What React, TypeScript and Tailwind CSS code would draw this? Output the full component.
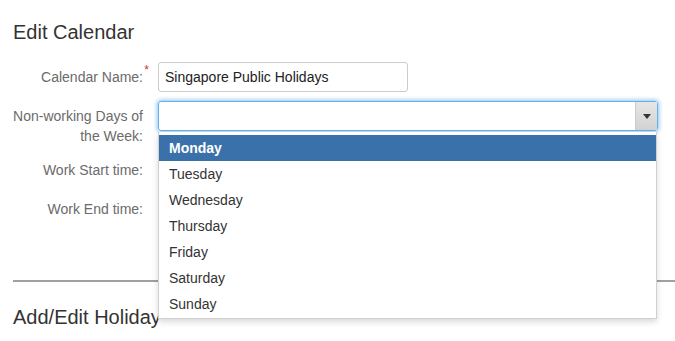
import React from "react";

const days = ["Monday", "Tuesday", "Wednesday", "Thursday", "Friday", "Saturday", "Sunday"];

function Label({ children, required }: { children: React.ReactNode; required?: boolean }) {
  return (
    <div className="w-[145px] shrink-0 pr-[15px] pt-[5px] text-right text-[14px] leading-[20px] text-[#6b6b6b] relative">
      {children}
      {required && (
        <span className="absolute right-[9px] top-[2px] text-[12px] leading-[12px] text-[#d0312d]">*</span>
      )}
    </div>
  );
}

export default function App() {
  return (
    <div
      className="w-[675px] h-[341px] overflow-hidden bg-white pl-[13px] pt-[21px] text-[#333]"
      style={{ fontFamily: '"Liberation Sans", Arial, sans-serif' }}
    >
      <h2 className="text-[20px] leading-[22px] text-[#333]">Edit Calendar</h2>

      <div className="mt-[19px] flex flex-col gap-[9px]">
        <div className="flex">
          <Label required>Calendar Name:</Label>
          <div className="flex h-[30px] w-[250px] items-center rounded-[3px] border border-[#ccc] px-[6px] text-[14px] text-[#222]">
            Singapore Public Holidays
          </div>
        </div>

        <div className="flex">
          <Label>
            Non-working Days of
            <br />
            the Week:
          </Label>
          <div className="relative h-[30px]">
            <div className="flex h-[30px] w-[500px] rounded-[3px] border border-[#66afe9] shadow-[0_0_4px_1px_rgba(102,175,233,0.75)]">
              <div className="flex-1" />
              <div className="flex w-[22px] items-center justify-center border-l border-[#ccc] bg-gradient-to-b from-[#e6e6e6] to-[#d2d2d2]">
                <svg width="8" height="5" viewBox="0 0 8 5">
                  <path d="M0 0h8L4 5z" fill="#333" />
                </svg>
              </div>
            </div>
            <div className="absolute left-0 top-[31px] z-10 w-[499px] border border-t-0 border-[#d0d0d0] bg-white pt-[3px] pb-[1px] shadow-[0_3px_6px_rgba(0,0,0,0.15)]">
              {days.map((d, i) => (
                <div
                  key={d}
                  className={
                    i === 0
                      ? "flex h-[26px] items-center bg-[#3a71aa] px-[10px] text-[14px] font-bold text-white"
                      : "flex h-[26px] items-center px-[10px] text-[14px] text-[#333]"
                  }
                >
                  {d}
                </div>
              ))}
            </div>
          </div>
        </div>

        <div className="flex h-[30px]">
          <Label>Work Start time:</Label>
        </div>

        <div className="flex h-[30px]">
          <Label>Work End time:</Label>
        </div>
      </div>

      <hr className="mt-[56px] border-0 border-t-[2px] border-[#a0a0a0]" />

      <h2 className="mt-[24px] text-[20px] leading-[22px] text-[#333]">Add/Edit Holiday</h2>
    </div>
  );
}
